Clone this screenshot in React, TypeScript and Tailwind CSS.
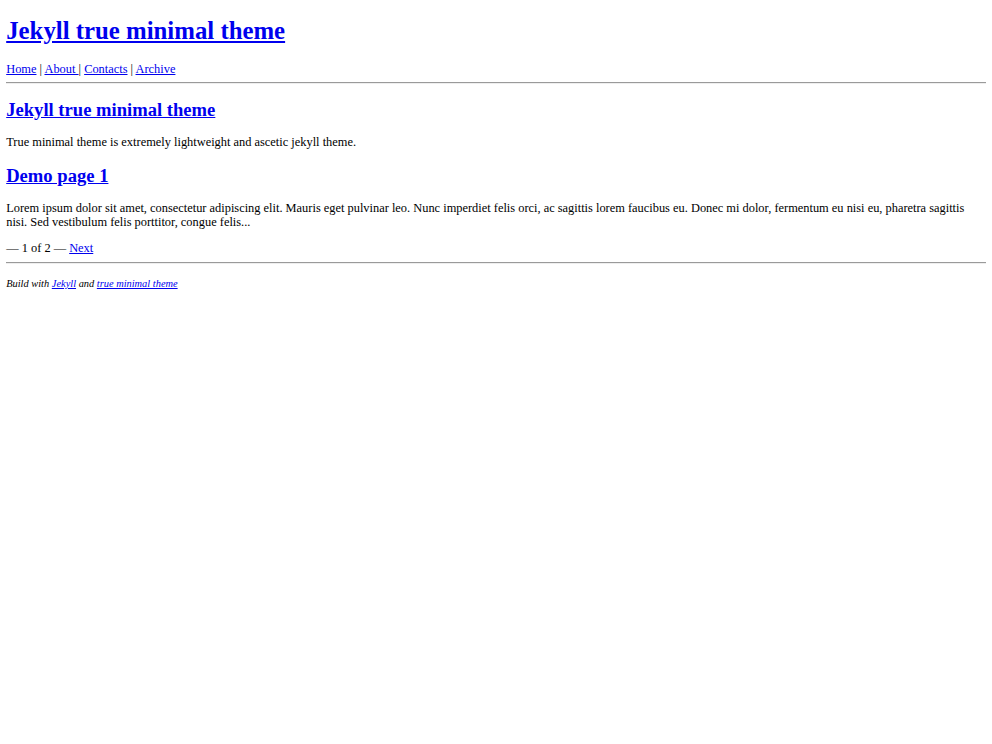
import React from 'react';

const linkCls = 'text-[#0000ee] underline';

const Hr = () => <hr className="my-[6.2px] h-0 border-0 border-t-[1px] border-b-[1px] border-t-[#9a9a9a] border-b-[#eeeeee]" />;

export default function App() {
    return (
        <div className="min-h-screen bg-white px-[6.2px] pt-[16.6px] font-['Liberation_Serif',serif] text-[12.4px] leading-[1.15] text-black">
            <h1 className="mb-[16.6px] text-[24.8px] font-bold leading-[1.15]">
                <a href="#" className={linkCls}>Jekyll true minimal theme</a>
            </h1>
            <div>
                <a href="#" className={linkCls}>Home</a> | <a href="#" className={linkCls}>About </a>| <a href="#" className={linkCls}>Contacts</a> | <a href="#" className={linkCls}>Archive</a>
            </div>
            <Hr />
            <h2 className="mt-[14.4px] mb-[15.4px] text-[18.6px] font-bold leading-[1.15]">
                <a href="#" className={linkCls}>Jekyll true minimal theme</a>
            </h2>
            <p className="my-[12.4px]">True minimal theme is extremely lightweight and ascetic jekyll theme.</p>
            <h2 className="mt-[15.4px] mb-[14.4px] text-[18.6px] font-bold leading-[1.15]">
                <a href="#" className={linkCls}>Demo page 1</a>
            </h2>
            <p className="mt-[12.4px] mb-[11.4px]">
                Lorem ipsum dolor sit amet, consectetur adipiscing elit. Mauris eget pulvinar leo. Nunc imperdiet felis orci, ac sagittis lorem faucibus eu. Donec mi dolor, fermentum eu nisi eu, pharetra sagittis nisi. Sed vestibulum felis porttitor, congue felis...
            </p>
            <div>
                — 1 of 2 — <a href="#" className={linkCls}>Next</a>
            </div>
            <div className="h-[1px]" />
            <Hr />
            <p className="my-[14px] text-[10.4px] italic">
                Build with <a href="#" className={linkCls}>Jekyll</a> and <a href="#" className={linkCls}>true minimal theme</a>
            </p>
        </div>
    );
}
